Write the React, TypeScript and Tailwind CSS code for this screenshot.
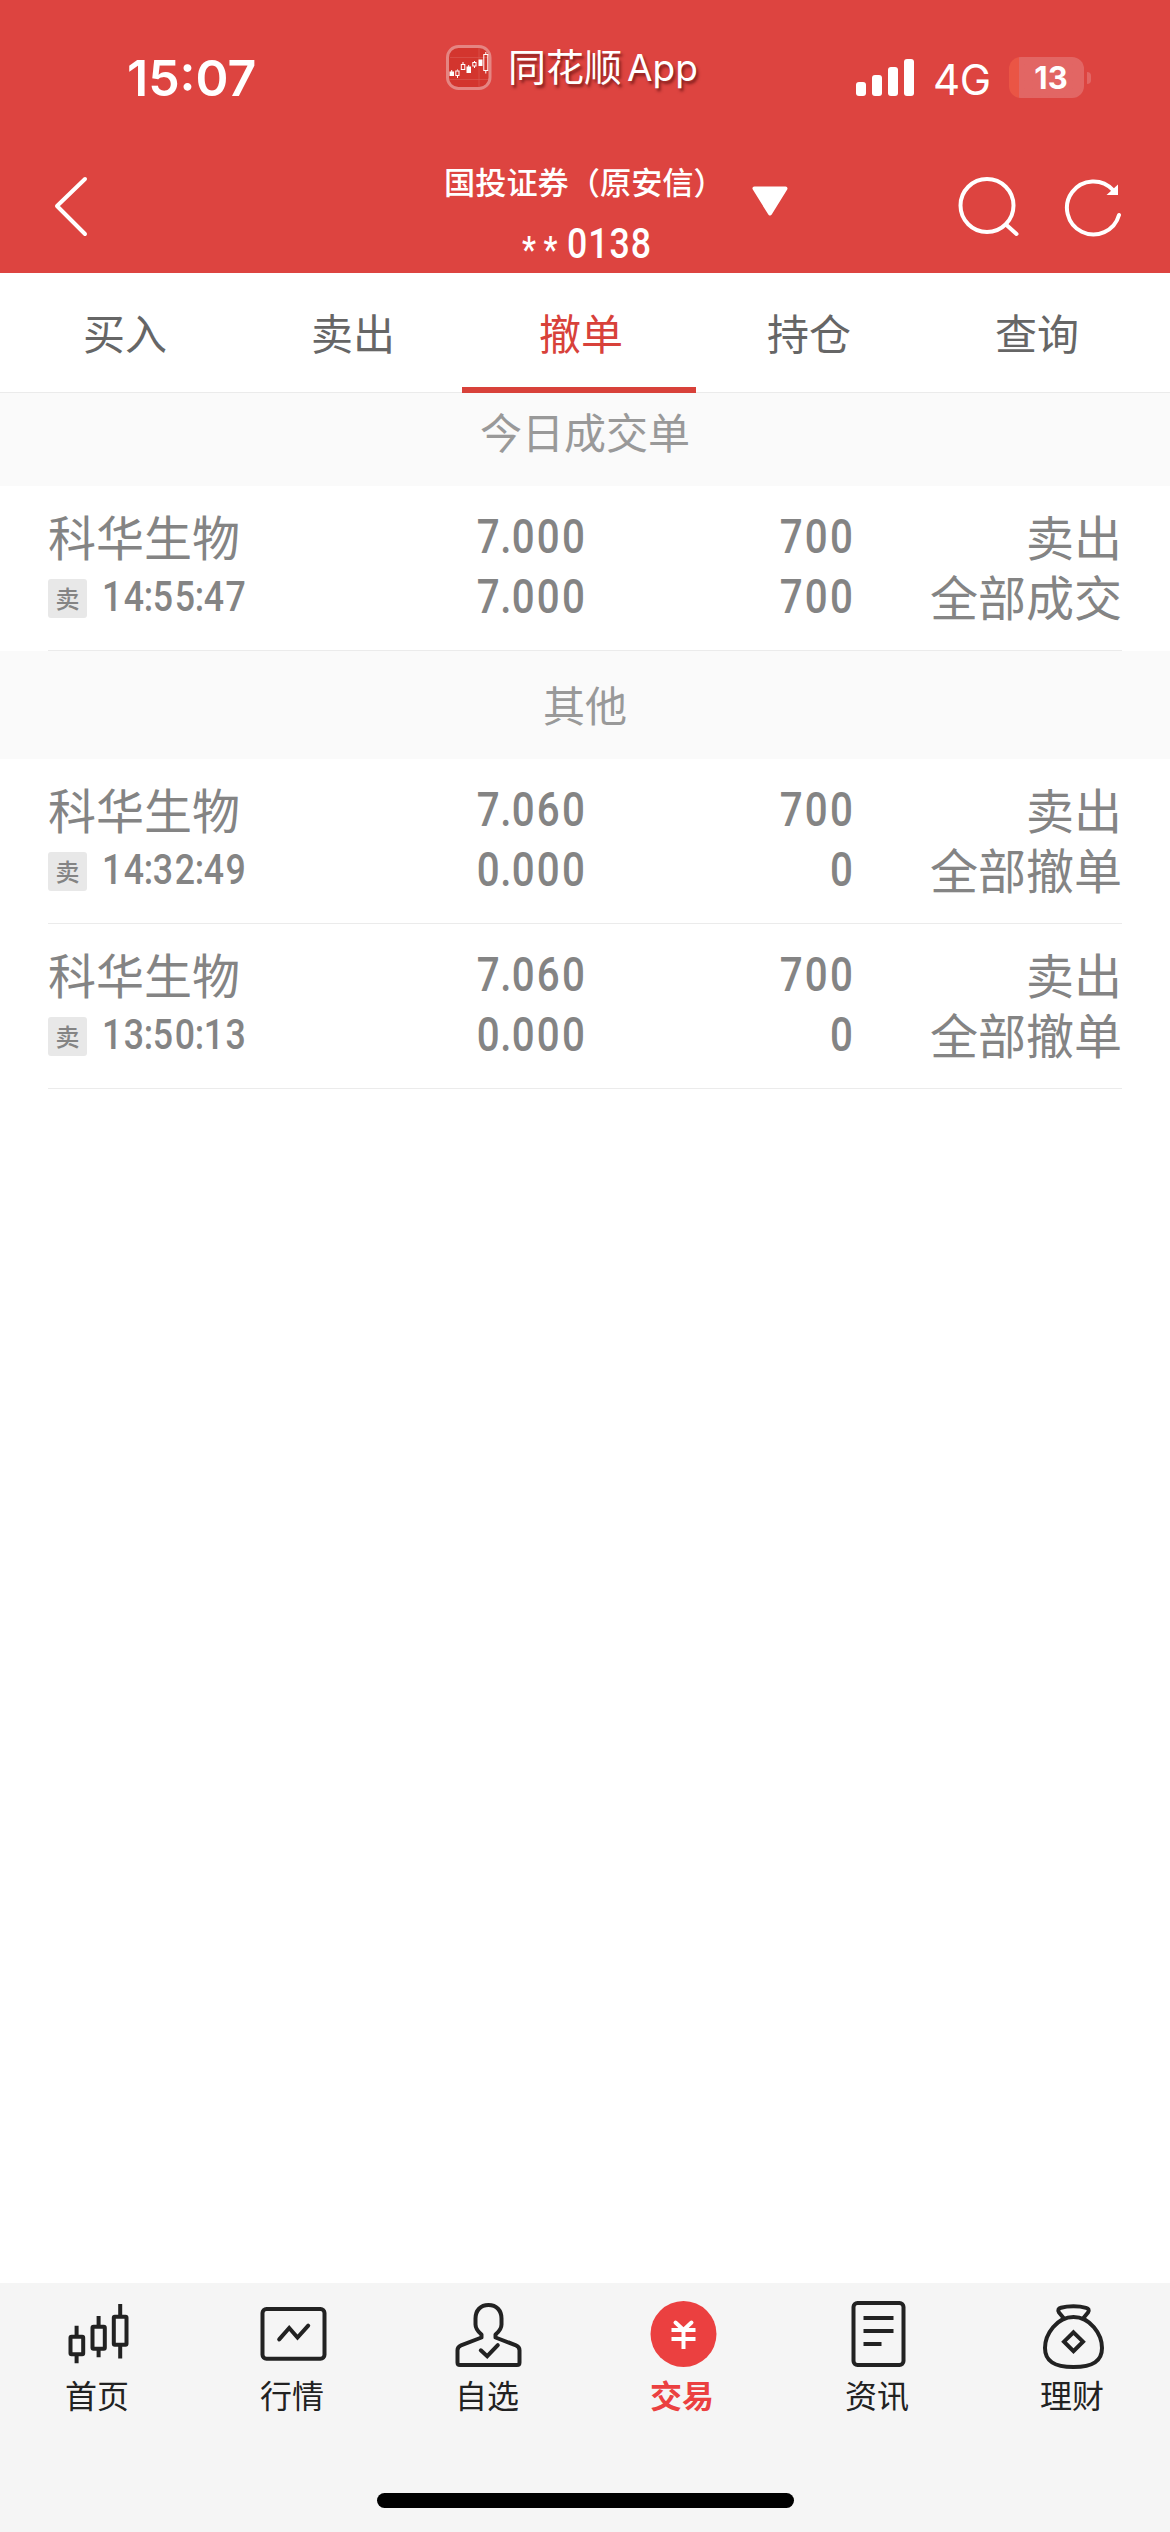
import { useState } from 'react';
import type { ReactNode } from 'react';

interface Order {
  id: number;
  name: string;
  time: string;
  price: string;
  dealPrice: string;
  amount: string;
  dealAmount: string;
  status: string;
}

const TABS = ['买入', '卖出', '撤单', '持仓', '查询'];

const dealOrders: Order[] = [
  { id: 1, name: '科华生物', time: '14:55:47', price: '7.000', dealPrice: '7.000', amount: '700', dealAmount: '700', status: '全部成交' },
];

const otherOrders: Order[] = [
  { id: 2, name: '科华生物', time: '14:32:49', price: '7.060', dealPrice: '0.000', amount: '700', dealAmount: '0', status: '全部撤单' },
  { id: 3, name: '科华生物', time: '13:50:13', price: '7.060', dealPrice: '0.000', amount: '700', dealAmount: '0', status: '全部撤单' },
];

// pull the separators closer to the digits
function tighten(text: string) {
  return text.split(/([.:])/).map((part, i) =>
    part === '.' || part === ':' ? (
      <span key={i} className="-mx-[2.2px]">{part}</span>
    ) : (
      part
    )
  );
}

// narrow DIN-like digits, right aligned
function Num({ children }: { children: string }) {
  return (
    <span className="block h-[60px] origin-right scale-x-[0.84] text-right font-['Roboto'] text-[48px] leading-[60px] font-medium tracking-[2.6px] -mr-[2px]">
      {tighten(children)}
    </span>
  );
}

function OrderRow({ order }: { order: Order }) {
  return (
    <div className="mx-[48px] flex h-[165px] border-b border-[#ebebeb] pt-[21px] text-[48px] leading-[60px] text-[#848484]">
      <div className="w-[300px]">
        <div className="-mt-[2px] h-[62px] whitespace-nowrap">{order.name}</div>
        <div className="flex h-[60px] items-center">
          <span className="mt-[2px] flex h-[39px] w-[39px] items-center justify-center rounded-[3px] bg-[#e8e8e8] text-[24px] leading-none font-medium">卖</span>
          <span className="ml-[15px] origin-left scale-x-[0.85] font-['Roboto'] text-[42px] leading-[60px] font-medium tracking-[1.8px]">
            {tighten(order.time)}
          </span>
        </div>
      </div>
      <div className="w-[237px]">
        <Num>{order.price}</Num>
        <Num>{order.dealPrice}</Num>
      </div>
      <div className="w-[268px]">
        <Num>{order.amount}</Num>
        <Num>{order.dealAmount}</Num>
      </div>
      <div className="-mt-[2px] flex-1 text-right">
        <div>卖出</div>
        <div>{order.status}</div>
      </div>
    </div>
  );
}

function SectionTitle({ children }: { children: ReactNode }) {
  return (
    <div className="flex h-[108px] shrink-0 items-center justify-center bg-[#fafafa] pb-[2px] text-[42px] leading-none text-[#999]">
      {children}
    </div>
  );
}

function NavIcon({ children }: { children: ReactNode }) {
  return (
    <svg width="72" height="72" viewBox="0 0 72 72" fill="none" stroke="#222" strokeWidth="4" strokeLinejoin="round">
      {children}
    </svg>
  );
}

const NAV = [
  {
    label: '首页',
    icon: (
      <NavIcon>
        <rect x="8.5" y="38.7" width="12.7" height="17.6" rx="1" />
        <path d="M14.6 27.7v10M14.6 57v8.3" />
        <rect x="30.5" y="28.7" width="12.3" height="22" rx="1" />
        <path d="M36.6 18v10M36.6 51v8.2" />
        <rect x="51.8" y="18.7" width="12.7" height="28" rx="1" />
        <path d="M58.2 6v12M58.2 47v13.5" />
      </NavIcon>
    ),
  },
  {
    label: '行情',
    icon: (
      <NavIcon>
        <rect x="5.5" y="11" width="62" height="49.7" rx="4" />
        <path d="M22.2 41.4L32.2 30L40.5 39.6L51.2 27.7" strokeLinecap="round" strokeLinejoin="miter" />
      </NavIcon>
    ),
  },
  {
    label: '自选',
    icon: (
      <NavIcon>
        <path d="M36.5 7c-8 0-13 5.5-13 13.5v6c0 5 3 7.5 6 10v3L9 47.3c-2 .8-3.5 2.5-3.5 5V64.5q0 2.5 2.5 2.5h57q2.5 0 2.5-2.5V52.3c0-2.5-1.5-4.2-3.5-5L43.5 39.5v-3c3-2.5 6-5 6-10v-6c0-8-5-13.5-13-13.5z" />
        <path d="M28.8 52.3L35.2 58.2L45.8 47.2" strokeLinecap="round" strokeLinejoin="miter" />
      </NavIcon>
    ),
  },
  {
    label: '交易',
    active: true,
    icon: (
      <NavIcon>
        <circle cx="36.5" cy="36" r="33" fill="#eb4040" stroke="none" />
        <path d="M28.5 24.5L36.5 32L44.5 24.5" stroke="#fff" strokeLinecap="round" />
        <path d="M24.5 32h24M24.5 41h24M36.5 31v20" stroke="#fff" />
      </NavIcon>
    ),
  },
  {
    label: '资讯',
    icon: (
      <NavIcon>
        <rect x="11.5" y="5" width="50" height="62" rx="4" />
        <path d="M21.5 20h30M21.5 33h30M21.5 46h18" />
      </NavIcon>
    ),
  },
  {
    label: '理财',
    icon: (
      <NavIcon>
        <path d="M36.5 19C20 19 8 36 8 50c0 13 9 19 28.5 19S65 63 65 50C65 36 53 19 36.5 19z" />
        <path d="M27 20.5L22 14.5c-1.5-2.5-.5-4 2-4.7 7-2 18-2 25 0 2.5.7 3.5 2.2 2 4.7L46 20.5" />
        <path d="M36.5 34.3L46 43.7L36.5 53.2L27 43.7z" strokeLinejoin="miter" />
      </NavIcon>
    ),
  },
];

function StatusBar() {
  return (
    <div className="flex h-[140px] items-start text-white">
      <div className="ml-[127px] mt-[48px] w-[319px] font-['Inter'] text-[50px] leading-[60px] font-semibold">15:07</div>
      <div className="mt-[45px] flex h-[45px] w-[410px] items-center">
        <svg width="46" height="45" viewBox="0 0 46 45" fill="none">
          <rect x="1.5" y="1.5" width="42.5" height="42" rx="11" fill="#d3352e" stroke="#e58582" strokeWidth="3" />
          <path d="M4 12.5h38M4 34.5h38M33 3v39" stroke="#dc5b55" strokeWidth="0.6" />
          <path d="M3.5 26.5h4.5v4.500h-4.500zM20.500 21.500h4.500v6.500h-4.500zM32.500 14.500h4v6.500h-4z" fill="#fff" />
          <g stroke="#fff" strokeWidth="1">
            <path d="M5.700 25v2M22.700 20v2M11.500 25.500v-1M11.500 31v2M17 17v2M28.500 16v2M28.500 21v2M39.800 7v3M39.800 26v2.500" />
            <rect x="9.8" y="26" width="3.2" height="4.5" />
            <rect x="15.3" y="19.5" width="3.5" height="5" />
            <rect x="26.8" y="17.5" width="3.2" height="3.5" />
            <rect x="37.8" y="9.5" width="4" height="16" />
          </g>
        </svg>
        <span className="-mt-[4px] ml-[16px] text-[38px] leading-none whitespace-nowrap [text-shadow:2px_3px_3px_rgba(60,0,0,0.55)]">
          同花顺<span className="ml-[5px] font-['Inter'] text-[37px]">App</span>
        </span>
      </div>
      <svg className="mt-[59px]" width="58" height="37" viewBox="0 0 58 37" fill="#fff">
        <rect x="0" y="23" width="10" height="14" rx="3" />
        <rect x="16" y="16" width="10" height="21" rx="3" />
        <rect x="32" y="8" width="10" height="29" rx="3" />
        <rect x="48" y="0" width="10" height="37" rx="3" />
      </svg>
      <div className="ml-[19px] mt-[55px] w-[76px] font-['Inter'] text-[42px] leading-[50px] tracking-[-0.5px]">4G</div>
      <div className="mt-[57px] flex items-center">
        <div className="flex h-[41px] w-[75px] items-center justify-center overflow-hidden rounded-[12px] bg-linear-to-r from-[#ea5545] from-[10px] to-[#e26664] to-[10px] pl-[9px] font-['Inter'] text-[31px] leading-none font-bold">
          13
        </div>
        <div className="ml-[3px] h-[12px] w-[4px] rounded-r-full bg-[#e26664]" />
      </div>
    </div>
  );
}

export default function App() {
  const [activeTab, setActiveTab] = useState('撤单');

  return (
    <div className="flex h-[2532px] w-[1170px] flex-col overflow-hidden bg-white font-['Noto_Sans_CJK_SC',sans-serif]">
      {/* Header */}
      <header className="h-[273px] shrink-0 bg-[#dd4440]">
        <StatusBar />
        <div className="flex h-[133px] items-start text-white">
          <svg className="ml-[51px] mt-[34px]" width="40" height="64" viewBox="0 0 40 64" fill="none" stroke="#fff" strokeWidth="4" strokeLinecap="round" strokeLinejoin="round">
            <path d="M34 5L6 32L34 60" />
          </svg>
          <div className="ml-[353px] mt-[20px] flex w-[282px] flex-col text-[31.2px] font-medium whitespace-nowrap">
            <span className="leading-[42px]">国投证券（原安信）</span>
            <span className="mt-[17px] ml-[78px] flex origin-left scale-x-[0.85] font-['Roboto'] text-[42px] leading-[50px] tracking-[1.2px]">
              <span className="mt-[6px] mr-[2px] text-[37px] tracking-[9px]">**</span>
              <span>0138</span>
            </span>
          </div>
          <svg className="ml-[26px] mt-[46px]" width="36" height="30" viewBox="0 0 36 30" fill="#fff" stroke="#fff" strokeWidth="4" strokeLinejoin="round">
            <path d="M2.5 2.5h31L18 27.5z" />
          </svg>
          <svg className="ml-[168px] mt-[33px]" width="64" height="64" viewBox="0 0 64 64" fill="none" stroke="#fff" strokeWidth="4" strokeLinecap="round">
            <circle cx="31" cy="32.5" r="26.5" />
            <path d="M50.500 52l10 9" />
          </svg>
          <svg className="ml-[43px] mt-[33px]" width="64" height="64" viewBox="0 0 64 64" fill="none" stroke="#fff" strokeWidth="4" strokeLinecap="round">
            <path d="M56 42A26.500 26.500 0 1 1 50 17" />
            <path d="M55 11.500V22H43.500z" fill="#fff" stroke="none" />
          </svg>
        </div>
      </header>

      {/* Tabs */}
      <nav className="relative z-10 flex h-[120px] shrink-0 border-b border-[#ebebeb] bg-white pl-[11px] text-[42px] text-[#666]">
        {TABS.map((tab) => (
          <button
            key={tab}
            className={`relative h-[120px] w-[228px] pb-[3px] ${tab === activeTab ? 'text-[#d8413a]' : ''}`}
            onClick={() => setActiveTab(tab)}
          >
            {tab}
            {tab === activeTab && <span className="absolute bottom-0 -left-[5px] h-[6px] w-[234px] bg-[#d8413a]" />}
          </button>
        ))}
      </nav>

      {/* Orders, scrolled slightly under the tabs */}
      <main className="-mt-[15px] flex-1">
        <SectionTitle>今日成交单</SectionTitle>
        {dealOrders.map((order) => (
          <OrderRow key={order.id} order={order} />
        ))}
        <SectionTitle>其他</SectionTitle>
        {otherOrders.map((order) => (
          <OrderRow key={order.id} order={order} />
        ))}
      </main>

      {/* Bottom navigation */}
      <footer className="flex h-[249px] shrink-0 flex-col items-center bg-[#f5f5f5]">
        <div className="grid w-full grid-cols-6 pt-[15px]">
          {NAV.map((item) => (
            <div key={item.label} className="flex flex-col items-center">
              {item.icon}
              <span className={`mt-[1px] mr-[1px] text-[32px] leading-[46px] ${item.active ? 'font-bold text-[#eb4040]' : 'text-[#222]'}`}>
                {item.label}
              </span>
            </div>
          ))}
        </div>
        <div className="mt-[76px] h-[15px] w-[417px] rounded-full bg-black" />
      </footer>
    </div>
  );
}
